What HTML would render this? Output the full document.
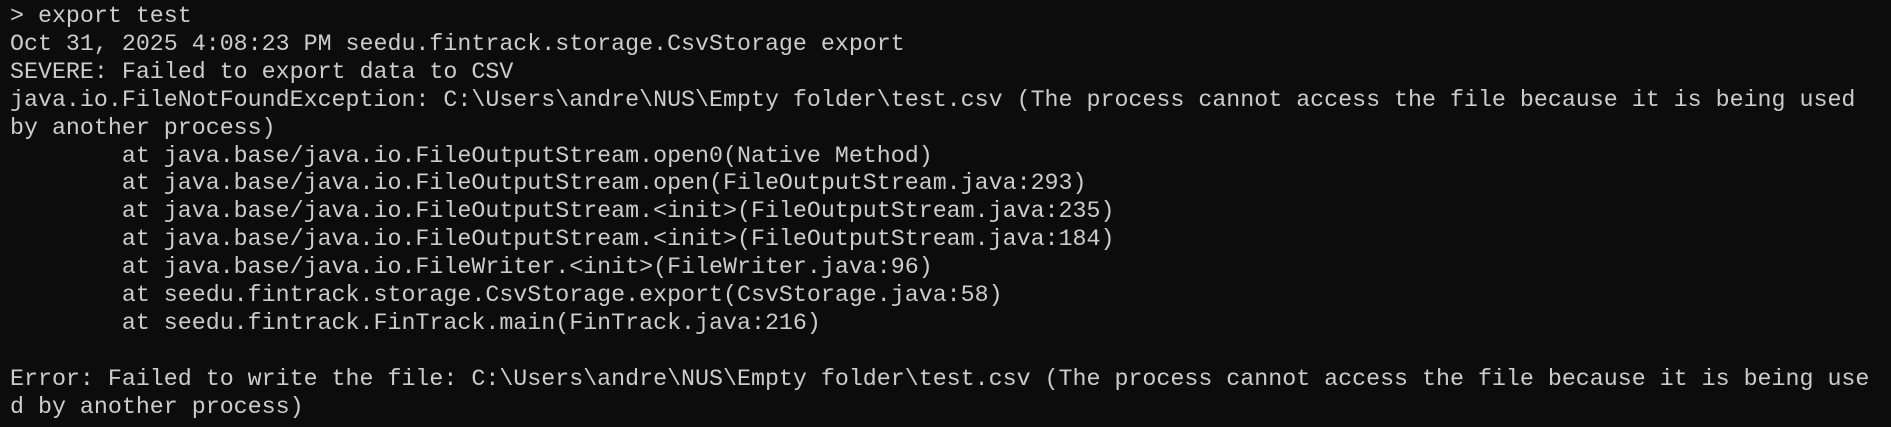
<!DOCTYPE html>
<html><head><meta charset="utf-8"><style>
html,body{margin:0;padding:0;background:#0c0c0c;width:1891px;height:427px;overflow:hidden}
pre{margin:0;position:absolute;left:10px;top:3px;font-family:"Liberation Mono",monospace;font-size:23.3px;line-height:27.9px;color:#cccccc;white-space:pre}
</style></head><body><pre>&gt; export test
Oct 31, 2025 4:08:23 PM seedu.fintrack.storage.CsvStorage export
SEVERE: Failed to export data to CSV
java.io.FileNotFoundException: C:\Users\andre\NUS\Empty folder\test.csv (The process cannot access the file because it is being used
by another process)
        at java.base/java.io.FileOutputStream.open0(Native Method)
        at java.base/java.io.FileOutputStream.open(FileOutputStream.java:293)
        at java.base/java.io.FileOutputStream.&lt;init&gt;(FileOutputStream.java:235)
        at java.base/java.io.FileOutputStream.&lt;init&gt;(FileOutputStream.java:184)
        at java.base/java.io.FileWriter.&lt;init&gt;(FileWriter.java:96)
        at seedu.fintrack.storage.CsvStorage.export(CsvStorage.java:58)
        at seedu.fintrack.FinTrack.main(FinTrack.java:216)

Error: Failed to write the file: C:\Users\andre\NUS\Empty folder\test.csv (The process cannot access the file because it is being use
d by another process)</pre></body></html>
